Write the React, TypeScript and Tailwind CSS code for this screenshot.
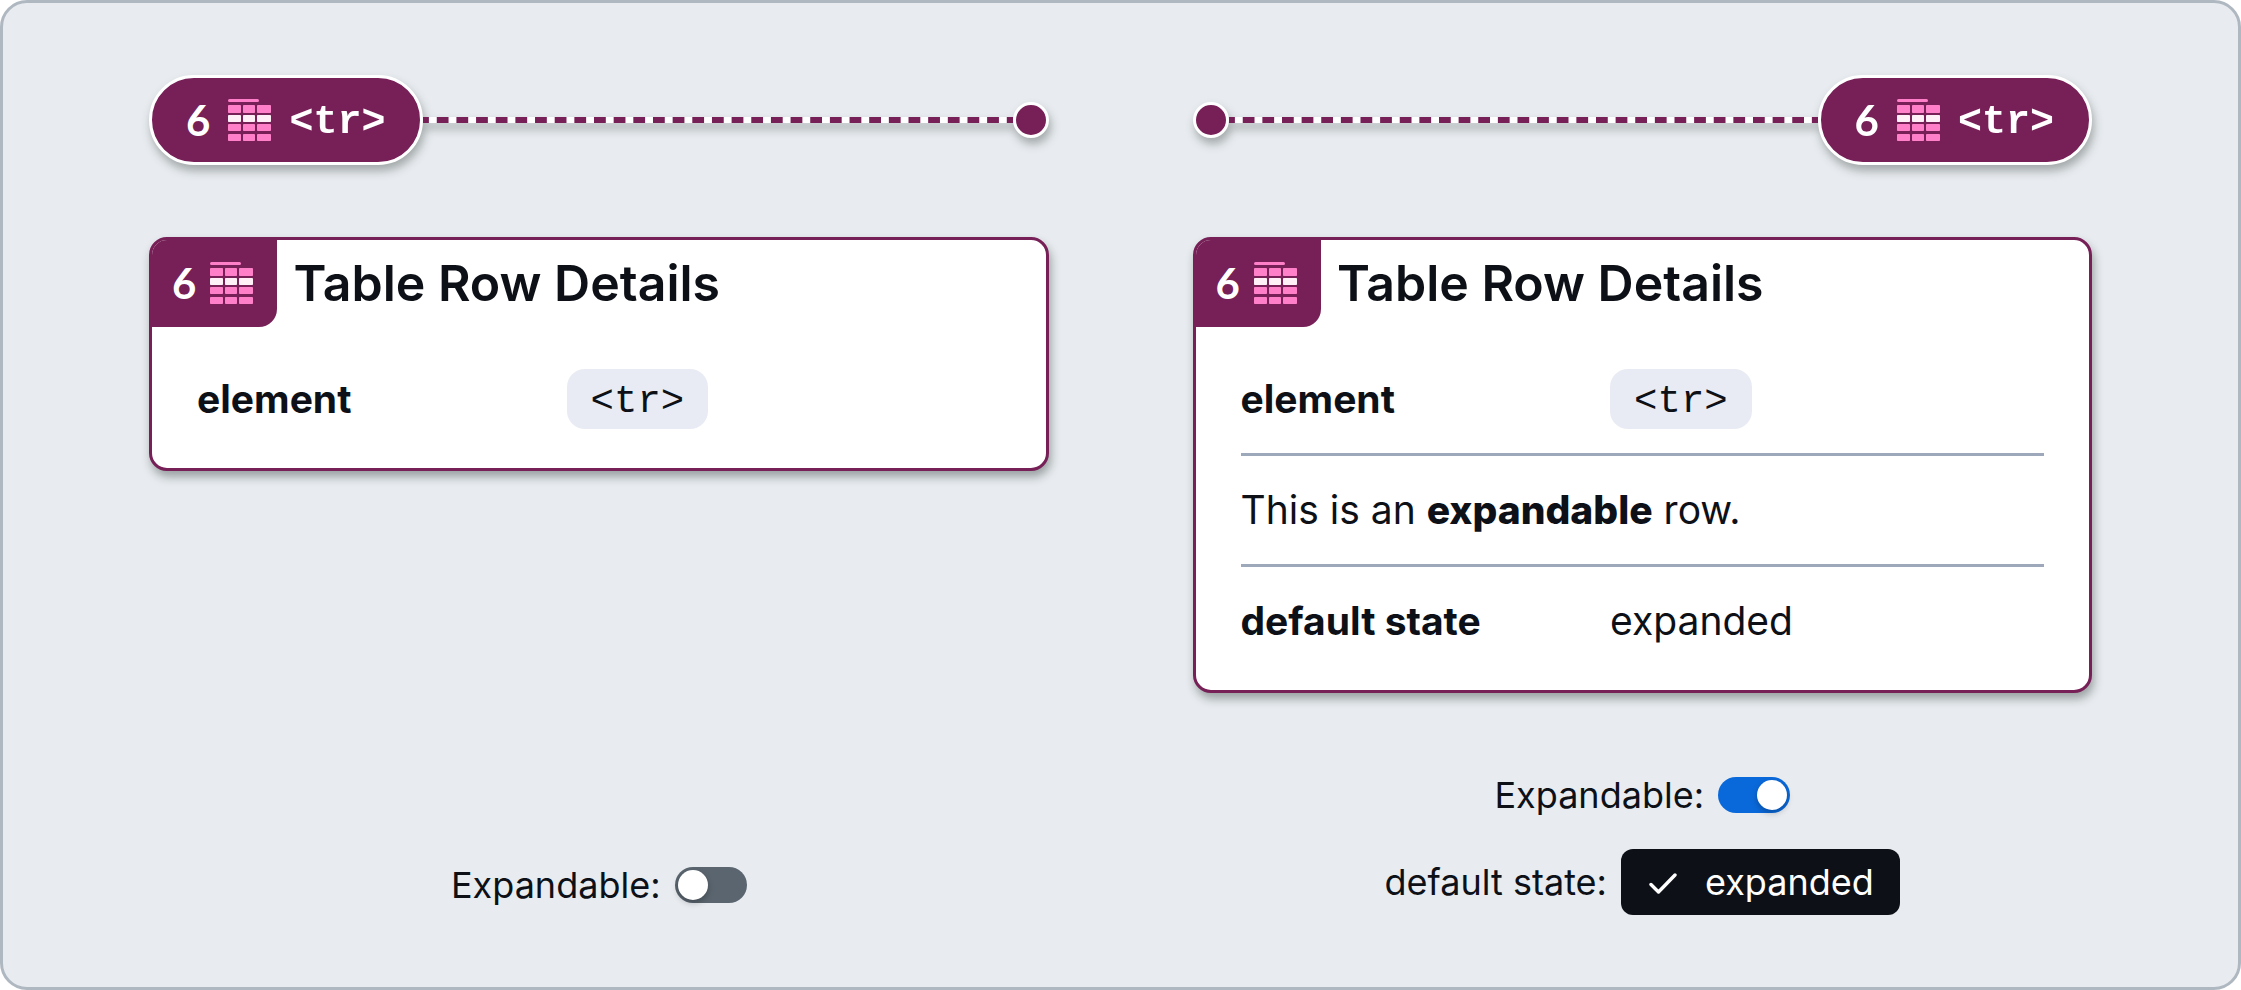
import { useState } from "react";

function TableRowIcon() {
  const columns = [
    { x: 0, width: 13 },
    { x: 15, width: 12 },
    { x: 29, width: 14 },
  ];
  const rows = [
    { y: 6, height: 8, fill: "#ff80c8" },
    { y: 16, height: 7, fill: "#ffeff7" },
    { y: 25, height: 7, fill: "#ff80c8" },
    { y: 35, height: 7, fill: "#ff80c8" },
  ];
  return (
    <svg viewBox="0 0 43 42" className="h-[42px] w-[43px] shrink-0" aria-hidden="true">
      <rect x="0" y="0" width="31" height="3" rx="1.5" fill="#ff80c8" />
      {rows.map((row) =>
        columns.map((column) => (
          <rect
            key={`${row.y}-${column.x}`}
            x={column.x}
            y={row.y}
            width={column.width}
            height={row.height}
            rx="0.8"
            fill={row.fill}
          />
        )),
      )}
    </svg>
  );
}

function Pill() {
  return (
    <div className="flex h-[90px] shrink-0 items-center rounded-full border-[3px] border-white bg-[#771f57] pr-[35px] pl-[34px] text-white">
      <span className="font-['Lato',sans-serif] text-[42px] leading-none font-bold">6</span>
      <span className="mr-[18px] ml-[18px]">
        <TableRowIcon />
      </span>
      <code className="pt-[6px] font-['Liberation_Mono',monospace] text-[40px] leading-none font-bold">&lt;tr&gt;</code>
    </div>
  );
}

function Connector({ reversed = false }: { reversed?: boolean }) {
  return (
    <div
      className={`flex items-center drop-shadow-[2px_6px_5px_rgba(20,30,25,0.33)] ${reversed ? "flex-row-reverse" : ""}`}
    >
      <Pill />
      <div className="h-[6px] flex-1 bg-[linear-gradient(90deg,#771f57_30%,#ffffff_30%,#ffffff_70%,#771f57_70%)] bg-[length:calc(100%/30)_100%]" />
      <div className="size-9 shrink-0 rounded-full border-[3px] border-white bg-[#771f57]" />
    </div>
  );
}

function DetailsCard({ expandable = false }: { expandable?: boolean }) {
  const row = "box-content flex min-h-[108px] items-center";
  const term = "w-[46%] shrink-0 font-bold";
  return (
    <section className="overflow-hidden rounded-[18px] border-[3px] border-[#771f57] bg-white pb-[15px] shadow-[2px_6px_10px_rgba(20,30,25,0.36)]">
      <header className="flex h-[87px] items-center gap-4">
        <div className="flex h-full items-center gap-[14px] rounded-br-[18px] bg-[#771f57] pr-6 pb-[2px] pl-5 text-white">
          <span className="font-['Lato',sans-serif] text-[42px] leading-none font-bold">6</span>
          <TableRowIcon />
        </div>
        <h2 className="pb-[2px] text-[50px] leading-none font-semibold">Table Row Details</h2>
      </header>
      <div className="mx-[45px] mt-[18px] divide-y-[3px] divide-[#9da9bb] text-[39px] leading-[48px]">
        <dl className={row}>
          <dt className={term}>element</dt>
          <dd>
            <code className="block rounded-[18px] bg-[#e8ebf3] px-6 pt-[9px] pb-[3px] font-['Liberation_Mono',monospace] text-[39px]">
              &lt;tr&gt;
            </code>
          </dd>
        </dl>
        {expandable && (
          <>
            <p className="box-content flex min-h-[108px] items-center whitespace-pre">
              This is an <strong className="font-extrabold">expandable</strong> row.
            </p>
            <dl className={row}>
              <dt className={term}>default state</dt>
              <dd>expanded</dd>
            </dl>
          </>
        )}
      </div>
    </section>
  );
}

function Toggle({ id, initial }: { id: string; initial: boolean }) {
  const [on, setOn] = useState(initial);
  return (
    <div className="flex h-[60px] items-center justify-center gap-[14px]">
      <label htmlFor={id}>Expandable:</label>
      <input
        id={id}
        type="checkbox"
        role="switch"
        checked={on}
        onChange={(event) => setOn(event.target.checked)}
        className="h-9 w-[72px] appearance-none rounded-full bg-[#5a656f] p-[3px] before:block before:size-[30px] before:rounded-full before:bg-white before:shadow-[0_3px_6px_rgba(0,0,0,0.25)] checked:bg-[#0a69da] checked:before:ml-9"
      />
    </div>
  );
}

function StateSelect() {
  return (
    <div className="flex items-center justify-center gap-[14px]">
      <label htmlFor="default-state">default state:</label>
      <div className="relative">
        <select
          id="default-state"
          defaultValue="expanded"
          className="block h-[66px] appearance-none rounded-[12px] bg-[#0d1117] pr-[26px] pl-[84px] text-white"
        >
          <option value="expanded">expanded</option>
        </select>
        <svg
          viewBox="0 0 28 21"
          className="pointer-events-none absolute top-6 left-7 h-[21px] w-7"
          fill="none"
          stroke="white"
          strokeWidth="3.4"
          strokeLinecap="round"
          strokeLinejoin="round"
          aria-hidden="true"
        >
          <path d="M2 11.5 L9.5 19 L26 2" />
        </svg>
      </div>
    </div>
  );
}

export default function App() {
  return (
    <div className="bg-white">
      <main className="grid grid-cols-2 gap-x-36 rounded-[27px] border-[3px] border-[#afb8c1] bg-[#e8ecf0] px-[146px] py-[72px] font-['Inter',sans-serif] text-[#0d1117]">
        <div className="flex flex-col gap-[72px]">
          <Connector />
          <DetailsCard />
          <div className="mt-auto text-[36px] leading-[48px]">
            <Toggle id="expandable-off" initial={false} />
          </div>
        </div>
        <div className="flex flex-col gap-[72px]">
          <Connector reversed />
          <DetailsCard expandable />
          <div className="flex flex-col gap-6 text-[36px] leading-[48px]">
            <Toggle id="expandable-on" initial={true} />
            <StateSelect />
          </div>
        </div>
      </main>
    </div>
  );
}
